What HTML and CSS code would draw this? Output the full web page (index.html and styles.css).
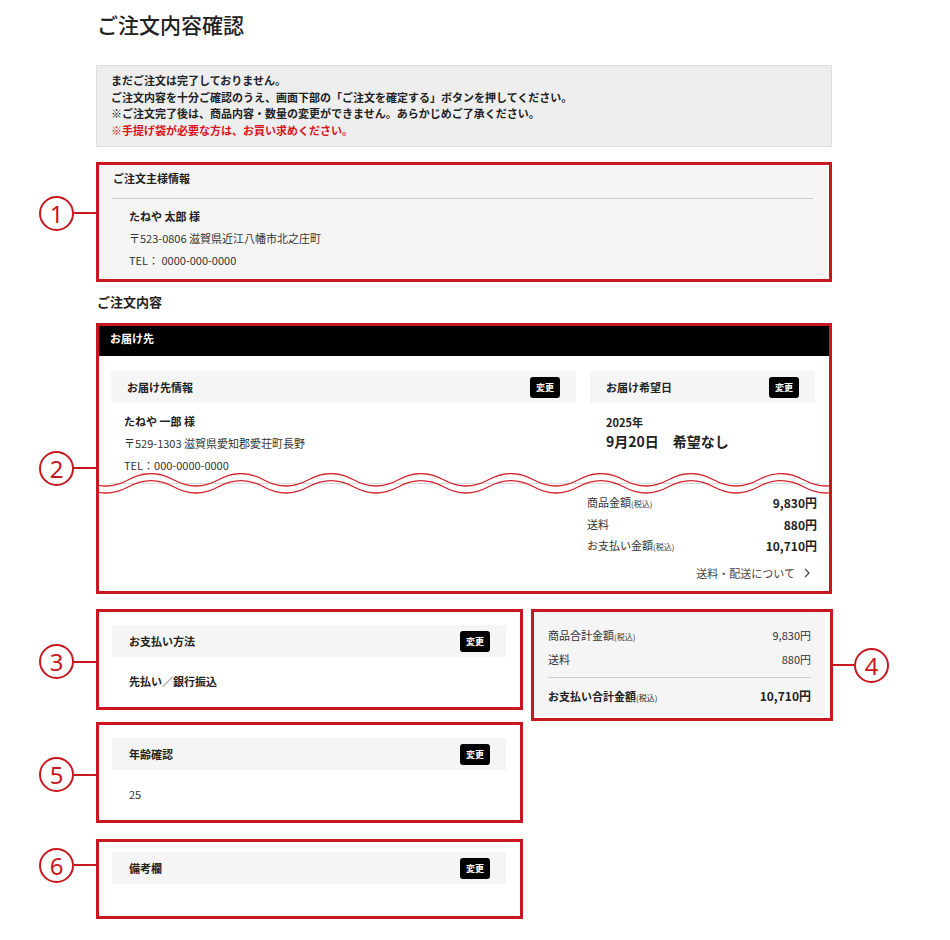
FILE: index.html
```html
<!DOCTYPE html>
<html lang="ja">
<head>
  <meta charset="UTF-8">
  <meta name="viewport" content="width=device-width, initial-scale=1.0">
  <title>ご注文内容確認</title>
  <link rel="stylesheet" href="styles.css">
</head>
<body>
  <div class="page">
    <h1 class="page-title">ご注文内容確認</h1>

    <div class="notice">
      <p>まだご注文は完了しておりません。</p>
      <p>ご注文内容を十分ご確認のうえ、画面下部の「ご注文を確定する」ボタンを押してください。</p>
      <p>※ご注文完了後は、商品内容・数量の変更ができません。あらかじめご了承ください。</p>
      <p class="notice-red">※手提げ袋が必要な方は、お買い求めください。</p>
    </div>

    <!-- 1: ご注文主様情報 -->
    <div class="annotated orderer-row">
      <div class="marker marker--up"><span class="num">1</span><span class="leader"></span></div>
      <section class="box orderer">
        <h3 class="orderer-title">ご注文主様情報</h3>
        <div class="orderer-body">
          <p class="name">たねや 太郎 様</p>
          <p>〒523-0806 滋賀県近江八幡市北之庄町</p>
          <p>TEL： 0000-000-0000</p>
        </div>
      </section>
    </div>

    <h2 class="section-title">ご注文内容</h2>

    <!-- 2: お届け先 -->
    <div class="annotated">
      <div class="marker marker--down"><span class="num">2</span><span class="leader"></span></div>
      <section class="box delivery">
        <div class="delivery-bar">お届け先</div>

        <div class="dest-cols">
          <div class="dest-col">
            <div class="panel-head">
              <h4>お届け先情報</h4>
              <button class="btn-change" type="button">変更</button>
            </div>
            <div class="dest-body">
              <p class="name">たねや 一郎 様</p>
              <p>〒529-1303 滋賀県愛知郡愛荘町長野</p>
              <p>TEL：000-0000-0000</p>
            </div>
          </div>
          <div class="dest-col">
            <div class="panel-head">
              <h4>お届け希望日</h4>
              <button class="btn-change" type="button">変更</button>
            </div>
            <div class="date-body">
              <p class="date-year">2025年</p>
              <p class="date-day">9月20日　希望なし</p>
            </div>
          </div>
        </div>

        <div class="cut">
          <svg width="730" height="22" viewBox="0 0 730 22">
            <line x1="10" y1="10.5" x2="721" y2="10.5" stroke="#dadada" stroke-width="1"/>
            <path class="wave" d="M-60.5 6.8 Q-38 -5.6 -15.5 6.8 T29.5 6.8 T74.5 6.8 T119.5 6.8 T164.5 6.8 T209.5 6.8 T254.5 6.8 T299.5 6.8 T344.5 6.8 T389.5 6.8 T434.5 6.8 T479.5 6.8 T524.5 6.8 T569.5 6.8 T614.5 6.8 T659.5 6.8 T704.5 6.8 T749.5 6.8 T794.5 6.8"/>
            <path class="wave" d="M-60.5 13.8 Q-38 1.4 -15.5 13.8 T29.5 13.8 T74.5 13.8 T119.5 13.8 T164.5 13.8 T209.5 13.8 T254.5 13.8 T299.5 13.8 T344.5 13.8 T389.5 13.8 T434.5 13.8 T479.5 13.8 T524.5 13.8 T569.5 13.8 T614.5 13.8 T659.5 13.8 T704.5 13.8 T749.5 13.8 T794.5 13.8"/>
          </svg>
        </div>

        <div class="totals">
          <div class="totals-row"><span>商品金額<small class="tax">(税込)</small></span><span class="val">9,830円</span></div>
          <div class="totals-row"><span>送料</span><span class="val">880円</span></div>
          <div class="totals-row"><span>お支払い金額<small class="tax">(税込)</small></span><span class="val">10,710円</span></div>
        </div>

        <a class="ship-link" href="#">送料・配送について
          <svg width="6" height="10" viewBox="0 0 6 10"><path d="M1 1 L5 5 L1 9" fill="none" stroke="#444" stroke-width="1.2"/></svg>
        </a>
      </section>
    </div>

    <div class="split">
      <div class="split-main">
        <!-- 3: お支払い方法 -->
        <div class="annotated">
          <div class="marker marker--low"><span class="num">3</span><span class="leader"></span></div>
          <section class="box option">
            <div class="panel-head">
              <h4>お支払い方法</h4>
              <button class="btn-change" type="button">変更</button>
            </div>
            <div class="option-body"><p class="strong">先払い／銀行振込</p></div>
          </section>
        </div>

        <!-- 5: 年齢確認 -->
        <div class="annotated age-row">
          <div class="marker marker--low"><span class="num">5</span><span class="leader"></span></div>
          <section class="box option">
            <div class="panel-head">
              <h4>年齢確認</h4>
              <button class="btn-change" type="button">変更</button>
            </div>
            <div class="option-body"><p>25</p></div>
          </section>
        </div>

        <!-- 6: 備考欄 -->
        <div class="annotated note-row">
          <div class="marker marker--high"><span class="num">6</span><span class="leader"></span></div>
          <section class="box option option--note">
            <div class="panel-head">
              <h4>備考欄</h4>
              <button class="btn-change" type="button">変更</button>
            </div>
          </section>
        </div>
      </div>

      <!-- 4: 合計 -->
      <div class="split-side">
        <section class="box summary">
          <div class="summary-inner">
            <div class="sum-row"><span>商品合計金額<small class="tax">(税込)</small></span><span>9,830円</span></div>
            <div class="sum-row"><span>送料</span><span>880円</span></div>
            <div class="sum-total"><span>お支払い合計金額<small class="tax">(税込)</small></span><span class="sum-val">10,710円</span></div>
          </div>
        </section>
        <div class="marker marker--right"><span class="leader"></span><span class="num">4</span></div>
      </div>
    </div>
  </div>
</body>
</html>
```

FILE: styles.css
```css
:root {
  --vermelho: #c8171e;
  --onda: #d3242d;
  --cinza-fundo: #f5f5f5;
  --texto: #222;
}

* {
  box-sizing: border-box;
}

body {
  margin: 0;
  font-family: "Noto Sans CJK JP", "Noto Sans", sans-serif;
  color: var(--texto);
  background: #fff;
}

p, h1, h2, h3, h4 {
  margin: 0;
}

.page {
  width: 832px;
  padding-left: 96px;
  padding-bottom: 20px;
}

.page-title {
  font-size: 21px;
  font-weight: 500;
  line-height: 30px;
  padding: 9px 0 0 1px;
  margin-bottom: 26px;
}

.notice {
  background: #eee;
  border: 1px solid #ddd;
  padding: 6px 14px 8px;
  font-size: 11px;
  font-weight: bold;
  line-height: 16.5px;
}

.notice-red {
  color: #d8141d;
}

/* anotações (círculo numerado + traço) */
.annotated {
  display: flex;
  margin-left: -96px;
}

.marker {
  flex: 0 0 96px;
  display: flex;
  align-items: center;
  padding-left: 39px;
}

.marker--up { padding-bottom: 18px; }
.marker--down { padding-top: 19px; }
.marker--low { padding-top: 4px; }
.marker--high { padding-bottom: 28px; }

.marker--right {
  flex: 0 0 56px;
  margin-right: -56px;
  padding-left: 0;
}

.marker .num {
  flex-shrink: 0;
  width: 35px;
  height: 35px;
  border: 2px solid var(--vermelho);
  border-radius: 50%;
  color: var(--vermelho);
  font-family: "Noto Sans", sans-serif;
  font-size: 24px;
  line-height: 31px;
  text-align: center;
}

.marker .leader {
  flex: 1;
  height: 2px;
  background: var(--vermelho);
}

.box {
  flex: 1;
  min-width: 0;
  border: 3px solid var(--vermelho);
  background: #fff;
}

/* 1 */
.orderer-row {
  margin-top: 15px;
}

.orderer {
  background: var(--cinza-fundo);
  padding: 5px 16px 8px 13px;
}

.orderer-title {
  font-size: 11px;
  font-weight: bold;
  line-height: 16px;
  padding: 0 1px 12px;
  border-bottom: 1px solid #ccc;
}

.orderer-body {
  padding: 6px 17px 0;
  font-size: 11px;
  line-height: 22px;
  color: #333;
}

.name {
  font-weight: bold;
  color: var(--texto);
}

.section-title {
  font-size: 13px;
  font-weight: bold;
  line-height: 18px;
  margin: 11px 0 12px 1px;
}

/* 2 */
.delivery-bar {
  background: #000;
  color: #fff;
  font-size: 11px;
  font-weight: bold;
  line-height: 16px;
  padding: 4px 11px 10px;
}

.dest-cols {
  display: grid;
  grid-template-columns: 465px 225px;
  gap: 14px;
  padding: 15px 14px 0 12px;
}

.panel-head {
  display: flex;
  align-items: center;
  justify-content: space-between;
  height: 32px;
  padding: 0 16px;
  background: var(--cinza-fundo);
}

.panel-head h4 {
  font-size: 11px;
  font-weight: bold;
  line-height: 16px;
}

.btn-change {
  width: 30px;
  height: 21px;
  padding: 0;
  border: none;
  border-radius: 3px;
  background: #000;
  color: #fff;
  font-family: inherit;
  font-size: 9px;
  font-weight: bold;
  line-height: 21px;
  cursor: pointer;
}

.dest-body {
  padding: 7px 13px 0;
  font-size: 11px;
  line-height: 22px;
  color: #333;
}

.date-body {
  padding: 11px 16px 0;
}

.date-year {
  font-size: 11px;
  font-weight: bold;
  line-height: 16px;
}

.date-day {
  font-size: 14px;
  font-weight: bold;
  line-height: 22px;
}

.cut {
  height: 19px;
  margin-top: -3px;
}

.cut svg {
  display: block;
  margin-bottom: -3px;
}

.wave {
  fill: none;
  stroke: var(--onda);
  stroke-width: 1.3;
}

.totals {
  width: 230px;
  margin: 0 12px 0 auto;
}

.totals-row {
  display: flex;
  justify-content: space-between;
  font-size: 11px;
  line-height: 21px;
  color: #333;
}

.totals-row .val {
  font-size: 12px;
  font-weight: bold;
  color: var(--texto);
}

.tax {
  font-size: 8px;
  font-weight: normal;
}

.ship-link {
  display: flex;
  justify-content: flex-end;
  align-items: center;
  gap: 9px;
  margin: 8px 19px 0 0;
  padding-bottom: 10px;
  font-size: 11px;
  line-height: 16px;
  color: #444;
  text-decoration: none;
}

/* 3, 5, 6 */
.split {
  display: flex;
  align-items: flex-start;
  gap: 8px;
  margin-top: 15px;
}

.split-main {
  flex: 0 0 427px;
}

.age-row {
  margin-top: 12px;
}

.note-row {
  margin-top: 16px;
}

.option {
  padding: 13px 14px 0 13px;
}

.option .panel-head {
  padding: 0 16px 0 17px;
}

.option-body {
  padding: 16px 17px 18px;
  font-size: 11px;
  line-height: 16px;
  color: #333;
}

.option-body .strong {
  font-weight: bold;
  color: var(--texto);
}

.option--note {
  padding-top: 10px;
  padding-bottom: 32px;
}

/* 4 */
.split-side {
  flex: 0 0 302px;
  display: flex;
  align-items: center;
}

.summary {
  padding: 0 5px 2px 0;
}

.summary-inner {
  background: var(--cinza-fundo);
  padding: 12px 14px 8px;
}

.sum-row {
  display: flex;
  justify-content: space-between;
  font-size: 11px;
  line-height: 22px;
  color: #333;
}

.sum-total {
  display: flex;
  justify-content: space-between;
  margin-top: 7px;
  padding-top: 8px;
  border-top: 1px solid #ccc;
  font-size: 11px;
  font-weight: bold;
  line-height: 20px;
}

.sum-total .sum-val {
  font-size: 12px;
}
```
